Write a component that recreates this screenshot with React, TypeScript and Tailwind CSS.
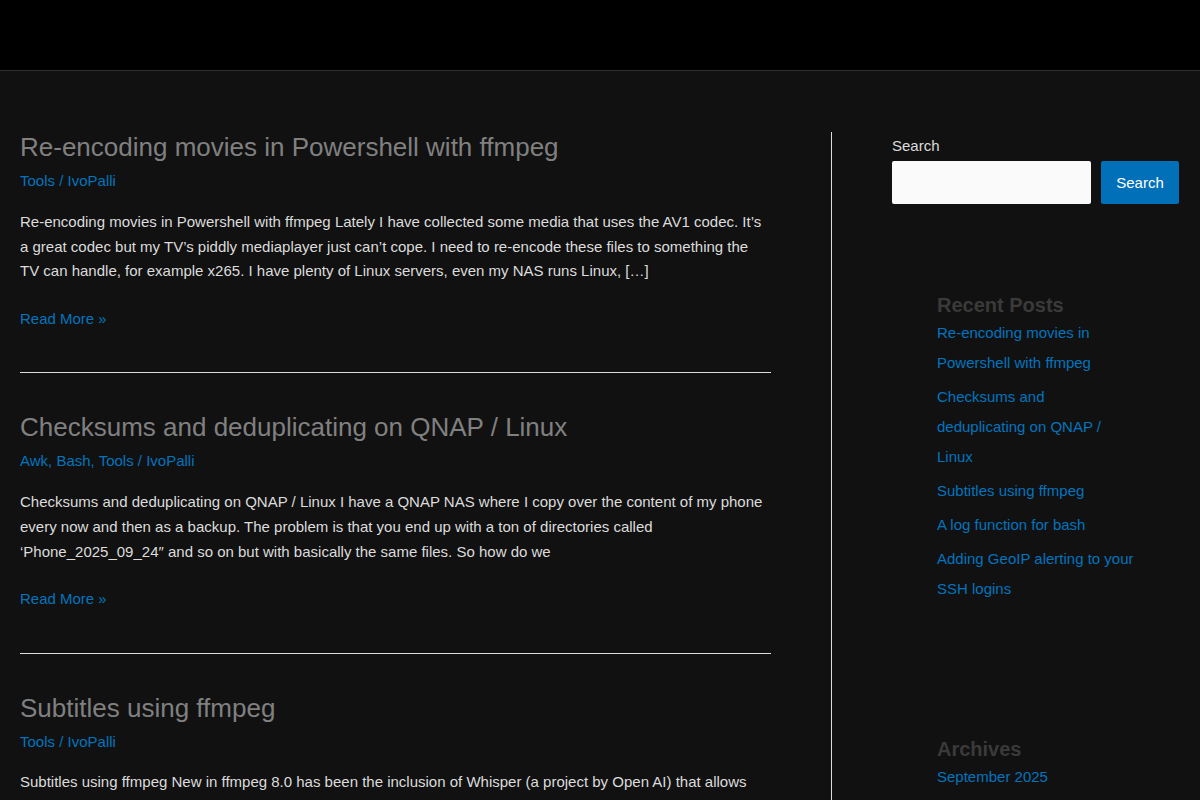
const posts = [
  {
    title: "Re-encoding movies in Powershell with ffmpeg",
    cats: ["Tools"],
    excerpt:
      "Re-encoding movies in Powershell with ffmpeg Lately I have collected some media that uses the AV1 codec. It\u2019s a great codec but my TV\u2019s piddly mediaplayer just can\u2019t cope. I need to re-encode these files to something the TV can handle, for example x265. I have plenty of Linux servers, even my NAS runs Linux, [\u2026]",
  },
  {
    title: "Checksums and deduplicating on QNAP / Linux",
    cats: ["Awk", "Bash", "Tools"],
    excerpt:
      "Checksums and deduplicating on QNAP / Linux I have a QNAP NAS where I copy over the content of my phone every now and then as a backup. The problem is that you end up with a ton of directories called \u2018Phone_2025_09_24\u2033 and so on but with basically the same files. So how do we",
  },
  {
    title: "Subtitles using ffmpeg",
    cats: ["Tools"],
    excerpt:
      "Subtitles using ffmpeg New in ffmpeg 8.0 has been the inclusion of Whisper (a project by Open AI) that allows you to generate subtitles for a video file using speech recognition on the audio track, right from the command line with a single filter.",
  },
];

const recent = [
  "Re-encoding movies in Powershell with ffmpeg",
  "Checksums and deduplicating on QNAP / Linux",
  "Subtitles using ffmpeg",
  "A log function for bash",
  "Adding GeoIP alerting to your SSH logins",
];

const archives = ["September 2025", "August 2025", "July 2025"];

const App = () => {
  return (
    <div
      className="min-h-[800px] bg-[#111111] text-[15px] text-[#dcdcdc]"
      style={{ fontFamily: '"Liberation Sans", Arial, sans-serif' }}
    >
      <header className="h-[71px] bg-black border-b border-[#2e2e2e]" />

      <div className="flex px-[20px] pt-[61px]">
        {/* posts */}
        <main className="w-[751px] shrink-0 mr-[60px]">
          {posts.map((p, i) => (
            <article key={p.title} className={i > 0 ? "border-t border-[#dddddd] pt-[39px]" : ""}>
              <h2 className="text-[26px] leading-[31px] text-[#808080]">{p.title}</h2>
              <div className="mt-[6px] leading-[24.75px] text-[#0274be]">
                {p.cats.join(", ")} / IvoPalli
              </div>
              <p className="mt-[16px] leading-[24.75px] text-[#dcdcdc]">{p.excerpt}</p>
              <div className="mt-[23px] leading-[24.75px] text-[#0274be]">Read More »</div>
              <div className="h-[40.5px]" />
            </article>
          ))}
        </main>

        {/* sidebar */}
        <aside className="flex-1 border-l border-[#dddddd] pl-[60px] min-h-[700px]">
          <div className="pt-[2px]">
            <label className="block leading-[24.75px] text-[#dcdcdc]">Search</label>
            <div className="mt-[2px] flex gap-[10px]">
              <input className="h-[43px] w-[199px] rounded-[2px] bg-[#fafafa] border-0 outline-none px-2" />
              <button className="h-[43px] w-[78px] rounded-[2px] bg-[#0170b9] pt-[2px] text-white text-[15px]">
                Search
              </button>
            </div>
          </div>

          <div className="pl-[45px] mt-[89px]">
            <h3 className="text-[20px] leading-[25px] font-bold text-[#3a3a3a]">Recent Posts</h3>
            <ul className="w-[198px]">
              {recent.map((r) => (
                <li key={r} className="leading-[30px] mb-[4px] text-[#0274be]">
                  {r}
                </li>
              ))}
            </ul>

            <h3 className="mt-[133px] text-[20px] leading-[25px] font-bold text-[#3a3a3a]">Archives</h3>
            <ul className="w-[198px]">
              {archives.map((a) => (
                <li key={a} className="leading-[30px] mb-[4px] text-[#0274be]">
                  {a}
                </li>
              ))}
            </ul>
          </div>
        </aside>
      </div>
    </div>
  );
};

export default App;
